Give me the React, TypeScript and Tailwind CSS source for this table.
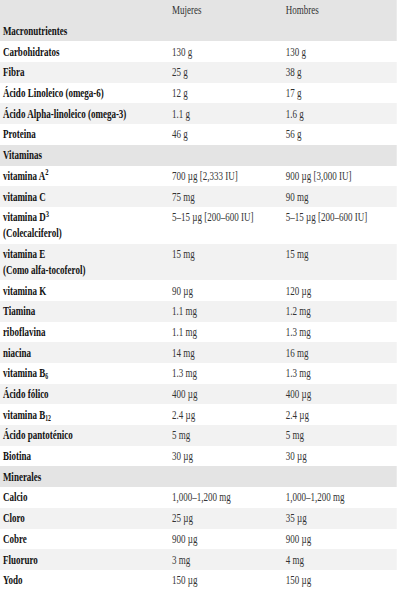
import React from "react";

type Row = { label: React.ReactNode; m: string; h: string };

const macros: Row[] = [
  { label: "Carbohidratos", m: "130 g", h: "130 g" },
  { label: "Fibra", m: "25 g", h: "38 g" },
  { label: "Ácido Linoleico (omega-6)", m: "12 g", h: "17 g" },
  { label: "Ácido Alpha-linoleico (omega-3)", m: "1.1 g", h: "1.6 g" },
  { label: "Proteina", m: "46 g", h: "56 g" },
];

const vitamins: Row[] = [
  {
    label: (
      <>
        vitamina A<sup className="text-[9px]">2</sup>
      </>
    ),
    m: "700 µg [2,333 IU]",
    h: "900 µg [3,000 IU]",
  },
  { label: "vitamina C", m: "75 mg", h: "90 mg" },
  {
    label: (
      <>
        vitamina D<sup className="text-[9px]">3</sup>
        <br />
        (Colecalciferol)
      </>
    ),
    m: "5–15 µg [200–600 IU]",
    h: "5–15 µg [200–600 IU]",
  },
  {
    label: (
      <>
        vitamina E
        <br />
        (Como alfa-tocoferol)
      </>
    ),
    m: "15 mg",
    h: "15 mg",
  },
  { label: "vitamina K", m: "90 µg", h: "120 µg" },
  { label: "Tiamina", m: "1.1 mg", h: "1.2 mg" },
  { label: "riboflavina", m: "1.1 mg", h: "1.3 mg" },
  { label: "niacina", m: "14 mg", h: "16 mg" },
  {
    label: (
      <>
        vitamina B<sub className="text-[8px]">6</sub>
      </>
    ),
    m: "1.3 mg",
    h: "1.3 mg",
  },
  { label: "Ácido fólico", m: "400 µg", h: "400 µg" },
  {
    label: (
      <>
        vitamina B<sub className="text-[8px]">12</sub>
      </>
    ),
    m: "2.4 µg",
    h: "2.4 µg",
  },
  { label: "Ácido pantoténico", m: "5 mg", h: "5 mg" },
  { label: "Biotina", m: "30 µg", h: "30 µg" },
];

const minerals: Row[] = [
  { label: "Calcio", m: "1,000–1,200 mg", h: "1,000–1,200 mg" },
  { label: "Cloro", m: "25 µg", h: "35 µg" },
  { label: "Cobre", m: "900 µg", h: "900 µg" },
  { label: "Fluoruro", m: "3 mg", h: "4 mg" },
  { label: "Yodo", m: "150 µg", h: "150 µg" },
];

const cell = "px-[4px] py-[2.35px]";

const Section = ({ title, rows }: { title: string; rows: Row[] }) => (
  <>
    <div className="grid grid-cols-[235px_158px_158px] bg-[#e4e4e4]">
      <div className={`${cell} font-bold text-[#111]`}>{title}</div>
      <div />
      <div />
    </div>
    {rows.map((r, i) => (
      <div
        key={i}
        className={`grid grid-cols-[235px_158px_158px] ${
          i % 2 == 1 ? "bg-[#f2f2f2]" : "bg-white"
        }`}
      >
        <div className={`${cell} font-bold text-[#111]`}>{r.label}</div>
        <div className={`${cell} text-[#333]`}>{r.m}</div>
        <div className={`${cell} text-[#333]`}>{r.h}</div>
      </div>
    ))}
  </>
);

export default function App() {
  return (
    <div className="w-[402px] h-[600px] overflow-hidden bg-white">
      <div className="w-[551px] origin-top-left scale-x-[0.72] font-['Liberation_Serif','Times_New_Roman',serif] text-[12.5px] leading-[16px]">
        {/* header */}
        <div className="grid grid-cols-[235px_158px_158px] bg-[#e4e4e4]">
          <div className={cell}>&nbsp;</div>
          <div className={`${cell} text-[#333]`}>Mujeres</div>
          <div className={`${cell} text-[#333]`}>Hombres</div>
        </div>
        <Section title="Macronutrientes" rows={macros} />
        <Section title="Vitaminas" rows={vitamins} />
        <Section title="Minerales" rows={minerals} />
      </div>
    </div>
  );
}
